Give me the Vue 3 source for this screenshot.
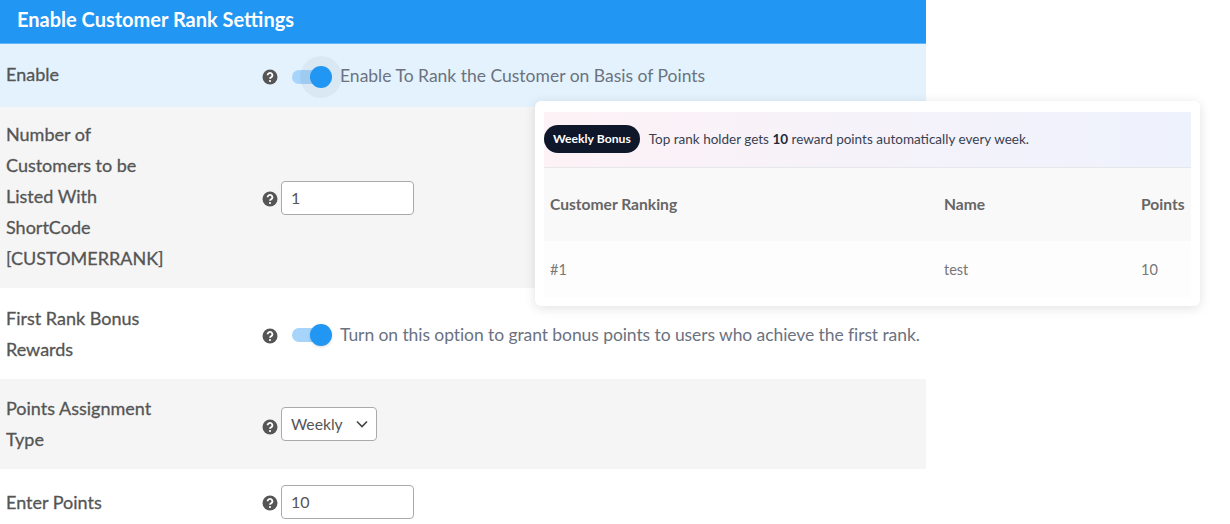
<script setup>
const summary = { badge: "Weekly Bonus", points: 10 };
const ranking = [{ rank: "#1", name: "test", points: 10 }];
</script>

<template>
  <div class="page">
    <section class="settings">
      <h2 class="title">Enable Customer Rank Settings</h2>

      <div class="row row-blue row-enable">
        <div class="label">Enable</div>
        <div class="field">
          <svg class="help" viewBox="0 0 16 16"><circle cx="8" cy="8" r="7.5" /><path d="M5.6 6.2a2.4 2.3 0 1 1 3.6 2c-.8.5-1.2.8-1.2 1.6" /><circle class="dot" cx="8" cy="12" r="1.1" /></svg>
          <span class="toggle halo"><span class="thumb"></span></span>
          <span class="desc">Enable To Rank the Customer on Basis of Points</span>
        </div>
      </div>

      <div class="row row-grey row-count">
        <div class="label">Number of Customers to be Listed With ShortCode [CUSTOMERRANK]</div>
        <div class="field">
          <svg class="help" viewBox="0 0 16 16"><circle cx="8" cy="8" r="7.5" /><path d="M5.6 6.2a2.4 2.3 0 1 1 3.6 2c-.8.5-1.2.8-1.2 1.6" /><circle class="dot" cx="8" cy="12" r="1.1" /></svg>
          <div class="box">1</div>
        </div>
      </div>

      <div class="row row-bonus">
        <div class="label">First Rank Bonus Rewards</div>
        <div class="field">
          <svg class="help" viewBox="0 0 16 16"><circle cx="8" cy="8" r="7.5" /><path d="M5.6 6.2a2.4 2.3 0 1 1 3.6 2c-.8.5-1.2.8-1.2 1.6" /><circle class="dot" cx="8" cy="12" r="1.1" /></svg>
          <span class="toggle"><span class="thumb"></span></span>
          <span class="desc tight">Turn on this option to grant bonus points to users who achieve the first rank.</span>
        </div>
      </div>

      <div class="row row-grey row-type">
        <div class="label">Points Assignment Type</div>
        <div class="field">
          <svg class="help" viewBox="0 0 16 16"><circle cx="8" cy="8" r="7.5" /><path d="M5.6 6.2a2.4 2.3 0 1 1 3.6 2c-.8.5-1.2.8-1.2 1.6" /><circle class="dot" cx="8" cy="12" r="1.1" /></svg>
          <div class="box select">
            Weekly
            <svg class="chevron" viewBox="0 0 12 8"><path d="M1 1.5l5 5 5-5" /></svg>
          </div>
        </div>
      </div>

      <div class="row row-points">
        <div class="label">Enter Points</div>
        <div class="field">
          <svg class="help" viewBox="0 0 16 16"><circle cx="8" cy="8" r="7.5" /><path d="M5.6 6.2a2.4 2.3 0 1 1 3.6 2c-.8.5-1.2.8-1.2 1.6" /><circle class="dot" cx="8" cy="12" r="1.1" /></svg>
          <div class="box">10</div>
        </div>
      </div>
    </section>

    <aside class="card">
      <div class="banner">
        <span class="badge">{{ summary.badge }}</span>
        <span class="note">Top rank holder gets <b>{{ summary.points }}</b> reward points automatically every week.</span>
      </div>
      <div class="grid head">
        <div>Customer Ranking</div>
        <div>Name</div>
        <div>Points</div>
      </div>
      <div v-for="item in ranking" :key="item.rank" class="grid body">
        <div>{{ item.rank }}</div>
        <div>{{ item.name }}</div>
        <div>{{ item.points }}</div>
      </div>
    </aside>
  </div>
</template>

<style scoped>
.page {
  position: relative;
  width: 1230px;
  height: 524px;
  overflow: hidden;
  background: #fff;
  font-family: Lato, "Liberation Sans", sans-serif;
}

.settings {
  width: 926px;
}

.title {
  margin: 0;
  height: 44px;
  padding-left: 17px;
  box-sizing: border-box;
  background: #2196f3;
  border-bottom: 1px solid #64b5f6;
  color: #fff;
  font-size: 20px;
  font-weight: 700;
  line-height: 39px;
}

.row {
  display: grid;
  grid-template-columns: 262px 1fr;
  align-items: center;
}

.row-blue {
  background: #e3f2fd;
}

.row-grey {
  background: #f5f5f5;
}

.row-enable {
  height: 63px;
}

.row-count {
  height: 181px;
}

.row-bonus {
  height: 91px;
}

.row-type {
  height: 90px;
}

.row-points {
  height: 66px;
}

.label {
  width: 168px;
  padding-left: 6px;
  color: #555;
  font-size: 18px;
  line-height: 31px;
  -webkit-text-stroke: 0.3px #555;
}

.row-enable .label,
.row-count .label {
  padding-bottom: 2px;
}

.field {
  display: flex;
  align-items: center;
  height: 34px;
}

.row-enable .field,
.row-bonus .field {
  margin-top: 3px;
}

.help {
  flex: none;
  width: 16px;
  height: 16px;
  margin-right: 3px;
}

.row-count .help,
.row-points .help {
  margin-top: 2px;
}

.row-bonus .help {
  margin-top: 1px;
}

.row-type .help {
  margin-top: 5px;
}

.help circle {
  fill: #555;
}

.help path {
  fill: none;
  stroke: #fff;
  stroke-width: 1.9;
}

.help .dot {
  fill: #fff;
}

.toggle {
  position: relative;
  flex: none;
  width: 28px;
  height: 14px;
  margin-left: 11px;
  margin-right: 20px;
  border-radius: 7px;
  background: #a6d4fa;
}

.thumb {
  position: absolute;
  top: -4px;
  right: -12px;
  width: 22px;
  height: 22px;
  border-radius: 50%;
  background: #2196f3;
  box-shadow: 0 1px 3px rgba(0, 0, 0, 0.15);
}

.halo .thumb {
  box-shadow: 0 0 0 10px rgba(0, 0, 0, 0.04);
}

.desc {
  margin-top: -3px;
  color: #6b7280;
  font-size: 17.5px;
  white-space: nowrap;
}

.tight {
  margin-top: -1px;
  letter-spacing: -0.08px;
}

.box {
  box-sizing: border-box;
  width: 133px;
  height: 34px;
  padding-left: 9px;
  border: 1px solid #aaa;
  border-radius: 4px;
  background: #fff;
  color: #555;
  font-size: 16px;
  line-height: 32px;
}

.select {
  position: relative;
  width: 96px;
  font-size: 15.7px;
}

.chevron {
  position: absolute;
  top: 12px;
  right: 8px;
  width: 12px;
  height: 8px;
  fill: none;
  stroke: #444;
  stroke-width: 1.6;
}

.card {
  position: absolute;
  top: 101px;
  left: 535px;
  box-sizing: border-box;
  width: 665px;
  height: 205px;
  padding: 11px 9px 0;
  border-radius: 6px;
  background: #fff;
  box-shadow: 0 2px 12px rgba(0, 0, 0, 0.12);
  font-family: Lato, sans-serif;
}

.banner {
  display: flex;
  align-items: center;
  height: 56px;
  padding-bottom: 2px;
  box-sizing: border-box;
  border-bottom: 1px solid #e5e7eb;
  background: linear-gradient(90deg, #fdf2f6, #eef2fd);
}

.badge {
  padding: 0 9px;
  border-radius: 14px;
  background: #0f172a;
  color: #fff;
  font-size: 12.2px;
  font-weight: 700;
  line-height: 28px;
}

.note {
  margin-left: 9px;
  color: #374151;
  font-size: 13.5px;
}

.note b {
  color: #1f2937;
}

.grid {
  display: grid;
  grid-template-columns: 394px 197px 1fr;
  padding-left: 6px;
  color: #666;
  font-size: 15.6px;
}

.head {
  height: 73px;
  padding-bottom: 2px;
  box-sizing: border-box;
  align-items: center;
  background: #f9f9f9;
  font-weight: 700;
}

.body {
  height: 56px;
  align-items: center;
  background: #fdfdfd;
  color: #777;
  font-size: 14.5px;
}
</style>
